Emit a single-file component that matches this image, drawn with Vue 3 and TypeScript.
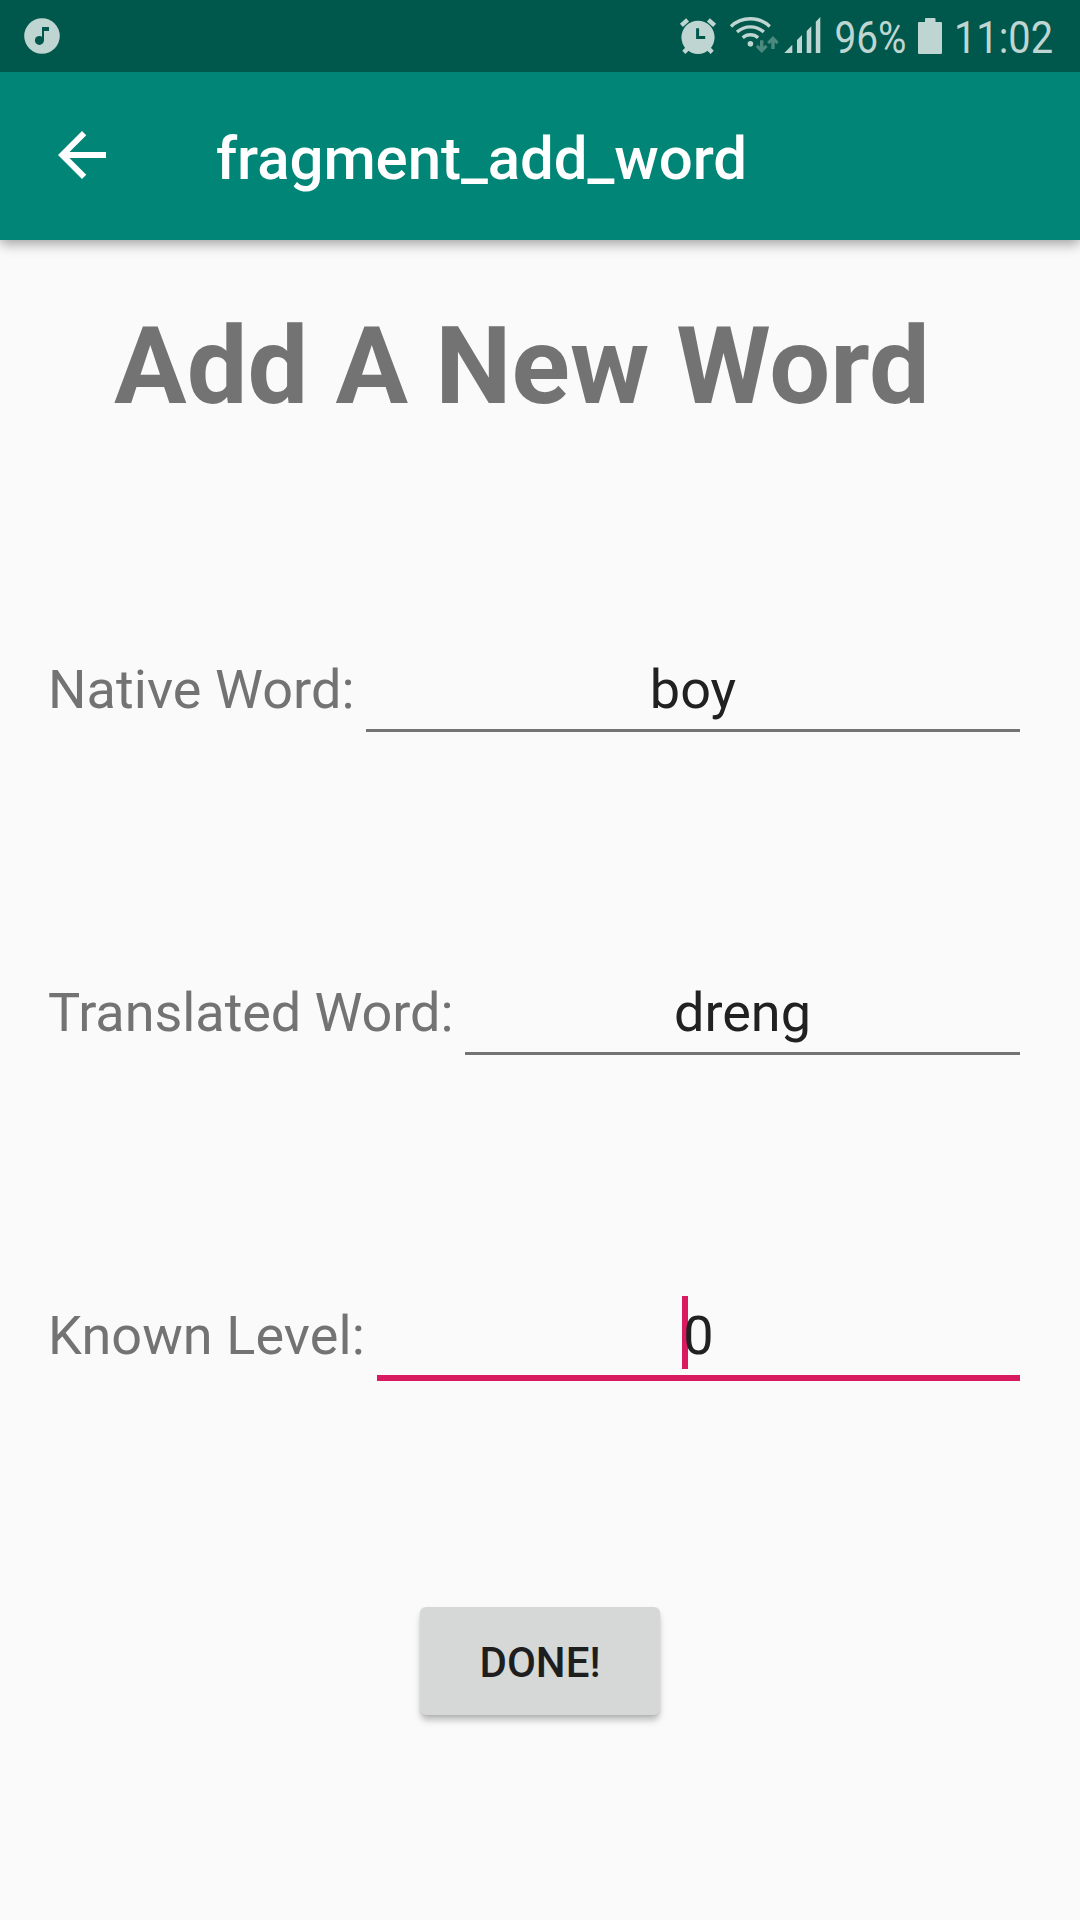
<script setup lang="ts">
import { ref } from 'vue'

interface Field {
  id: string
  label: string
  value: string
  focused: boolean
}

const battery = '96%'
const time = '11:02'
const title = 'fragment_add_word'

const fields = ref<Field[]>([
  { id: 'native', label: 'Native Word:', value: 'boy', focused: false },
  { id: 'translated', label: 'Translated Word:', value: 'dreng', focused: false },
  { id: 'level', label: 'Known Level:', value: '0', focused: true },
])
</script>

<template>
  <div class="screen">
    <div class="status-bar">
      <svg class="status-icon music" width="60" height="72" viewBox="0 0 60 72">
        <circle cx="42" cy="36" r="17.8" />
        <g class="cutout">
          <circle cx="39.4" cy="40.4" r="4.5" />
          <path d="M42 27h7v4h-5v9.4h-2z" />
        </g>
      </svg>
      <div class="status-right">
        <svg class="status-icon" width="48" height="72" viewBox="676 0 48 72">
          <circle cx="698" cy="37.3" r="16.6" />
          <path class="bold-line" d="M681.4 25.4l6.2-5.6M714.6 25.4l-6.2-5.6M683.8 52.4l5-5M712.2 52.4l-5-5" />
          <path class="hands" d="M697.6 28.3v9.2h7.6" />
        </svg>
        <svg class="status-icon" width="56" height="72" viewBox="724 0 56 72">
          <path class="wave" d="M731 26.4a28.6 28.6 0 0 1 38.8 0M737 32a20 20 0 0 1 26.8 0M742.7 37.7a11.6 11.6 0 0 1 15.4 0" />
          <circle cx="750.4" cy="43.7" r="2.8" />
          <path class="traffic" d="M760 40.3h3.4v6.5l2-2 2.2 2.2-5.9 6-5.9-6 2.2-2.2 2 2zM771.3 49v-6.8l-2 2-2.2-2.2 5.9-6 5.7 6-2.2 2.2-1.8-2V49z" />
        </svg>
        <svg class="status-icon" width="46" height="72" viewBox="780 0 46 72">
          <path d="M784.3 53l8-8.3V53zM797 53V40l5-5v18zM806.7 53V31l4.6-4.7V53zM815.8 53V21.7l4.5-4.7v36z" />
        </svg>
        <svg class="status-icon" width="86" height="72" viewBox="826 0 86 72">
          <text x="834.4" y="52.7" textLength="72" lengthAdjust="spacingAndGlyphs">{{ battery }}</text>
        </svg>
        <svg class="status-icon" width="36" height="72" viewBox="912 0 36 72">
          <path d="M919 22h6v-3q0-1 1-1h8.5q1 0 1 1v3h5.500q1 0 1 1v30q0 1-1 1h-22q-1 0-1-1V23q0-1 1-1z" />
        </svg>
        <svg class="status-icon" width="132" height="72" viewBox="948 0 132 72">
          <text x="954" y="52.7" textLength="99" lengthAdjust="spacingAndGlyphs">{{ time }}</text>
        </svg>
      </div>
    </div>

    <header class="app-bar">
      <svg class="back" width="72" height="72" viewBox="0 0 24 24">
        <path d="M20 11H7.83l5.59-5.59L12 4l-8 8 8 8 1.41-1.41L7.83 13H20v-2z" />
      </svg>
      <span class="app-title">{{ title }}</span>
    </header>

    <main class="content">
      <h1 class="heading">Add A New Word</h1>
      <div v-for="f in fields" :key="f.id" class="row" :class="[f.id, { focused: f.focused }]">
        <label class="label" :for="f.id">{{ f.label }}</label>
        <div class="field">
          <span v-if="f.focused" class="cursor"></span>
          <input :id="f.id" v-model="f.value" class="input" type="text" />
        </div>
      </div>
      <button class="done" type="button">DONE!</button>
    </main>
  </div>
</template>

<style>
body {
  margin: 0;
  background: #fafafa;
}
</style>

<style scoped>
.screen {
  display: flex;
  flex-direction: column;
  width: 1080px;
  height: 1920px;
  overflow: hidden;
  background: #fafafa;
  font-family: Roboto, 'Liberation Sans', sans-serif;
}

.status-bar {
  position: relative;
  z-index: 1;
  display: flex;
  justify-content: space-between;
  height: 72px;
  flex: none;
  background: #00574b;
}

.status-right {
  display: flex;
}

.status-icon {
  display: block;
  overflow: visible;
  fill: #bfd5d2;
}

.status-icon text {
  font-size: 45px;
}

.status-icon .cutout {
  fill: #00574b;
}

.bold-line {
  stroke: #bfd5d2;
  stroke-width: 4.4;
}

.hands {
  fill: none;
  stroke: #00574b;
  stroke-width: 3;
}

.wave {
  fill: none;
  stroke: #bfd5d2;
  stroke-width: 3.4;
}

.traffic {
  fill: #4c897f;
}

.app-bar {
  display: flex;
  align-items: center;
  height: 168px;
  flex: none;
  box-sizing: border-box;
  padding-left: 46px;
  background: #008577;
  box-shadow: 0 4px 12px rgba(0, 0, 0, 0.36);
}

.back {
  fill: #fff;
  margin-bottom: 2px;
}

.app-title {
  margin: 6px 0 0 98px;
  color: #fff;
  font-size: 60px;
  font-weight: 500;
  letter-spacing: -0.07px;
  line-height: 72px;
}

.content {
  display: flex;
  flex-direction: column;
  padding: 62px 60px 0 48px;
}

.heading {
  margin: 0 0 228px 66px;
  color: #737373;
  font-size: 108px;
  font-weight: 700;
  letter-spacing: 0.12px;
  line-height: 128px;
  white-space: nowrap;
}

.row {
  display: flex;
  height: 74px;
  margin-bottom: 249px;
}

.label {
  flex: none;
  box-sizing: border-box;
  width: 318px;
  color: #737373;
  font-size: 54px;
  letter-spacing: 0.07px;
  line-height: 64px;
  white-space: nowrap;
}

.translated .label {
  width: 417px;
  letter-spacing: -0.06px;
}

.level .label {
  width: 329px;
  letter-spacing: 0.1px;
}

.field {
  position: relative;
  flex: 1;
  min-width: 0;
  box-sizing: border-box;
  border-bottom: 3px solid #737373;
}

.input {
  position: relative;
  display: block;
  width: 100%;
  height: 64px;
  padding: 0;
  border: 0;
  outline: 0;
  background: transparent;
  color: #212121;
  font: 54px/64px Roboto, 'Liberation Sans', sans-serif;
  text-align: center;
}

.row.focused {
  height: 77px;
  margin-bottom: 226px;
}

.focused .field {
  border-bottom: 6px solid #d81b60;
}

.cursor {
  position: absolute;
  left: calc(50% - 16.5px);
  top: -8px;
  width: 6px;
  height: 73px;
  background: #d81b60;
}

.done {
  align-self: center;
  width: 240px;
  height: 108px;
  margin-left: 12px;
  padding: 3px 0 0;
  border: 0;
  border-radius: 6px;
  background: #d6d8d7;
  box-shadow: 0 6px 7px -1px rgba(0, 0, 0, 0.26), 0 1px 3px rgba(0, 0, 0, 0.08);
  color: #1e1e1e;
  font: 500 42px/50px Roboto, 'Liberation Sans', sans-serif;
  text-align: center;
}
</style>
